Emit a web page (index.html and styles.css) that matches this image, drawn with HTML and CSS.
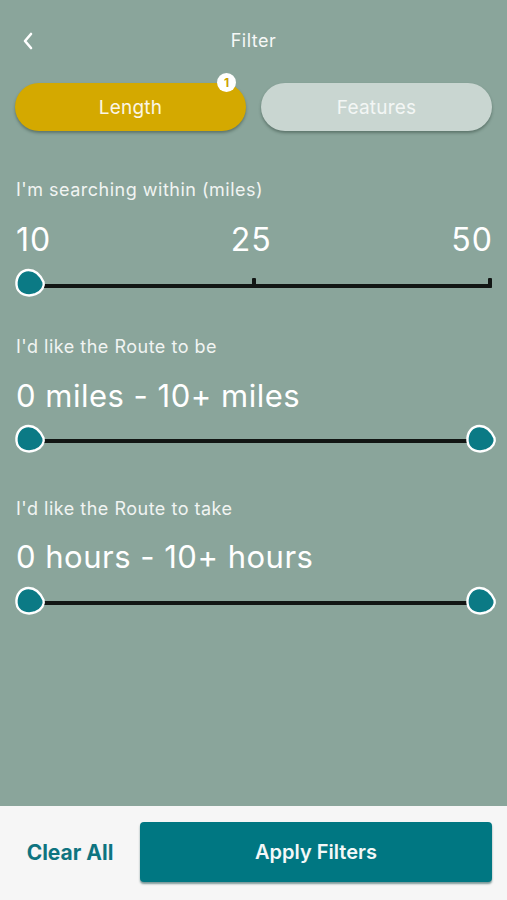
FILE: index.html
```html
<!DOCTYPE html>
<html>
<head>
<meta charset="utf-8">
<link rel="stylesheet" href="styles.css">
</head>
<body>
<div class="screen">
  <header class="topbar">
    <span class="back">
      <svg width="12" height="18" viewBox="0 0 12 18"><path d="M9 2 L3 9 L9 16" fill="none" stroke="#fff" stroke-width="2.6" stroke-linecap="round" stroke-linejoin="round"/></svg>
    </span>
    <h1 class="title">Filter</h1>
  </header>

  <div class="tabs">
    <div class="tab tab-active">Length<span class="badge">1</span></div>
    <div class="tab tab-idle">Features</div>
  </div>

  <section class="group g1">
    <div class="label">I'm searching within (miles)</div>
    <div class="scale"><span>10</span><span>25</span><span>50</span></div>
    <div class="slider">
      <div class="track"></div>
      <div class="tick tick-mid"></div>
      <div class="tick tick-end"></div>
      <svg class="thumb thumb-left" width="32" height="32" viewBox="0 0 32 32"><path d="M14.5 3 C21.5 3 26.5 8.5 29.5 15 C30.8 19 28 24.5 21.5 27.2 C14 30 3.5 28 2.5 18 C1.8 9 7.5 3 14.5 3 Z" fill="#0b7a85" stroke="#fff" stroke-width="2.4"/></svg>
    </div>
  </section>

  <section class="group g2">
    <div class="label">I'd like the Route to be</div>
    <div class="value">0 miles - 10+ miles</div>
    <div class="slider">
      <div class="track"></div>
      <svg class="thumb thumb-left" width="32" height="32" viewBox="0 0 32 32"><path d="M14.5 3 C21.5 3 26.5 8.5 29.5 15 C30.8 19 28 24.5 21.5 27.2 C14 30 3.5 28 2.5 18 C1.8 9 7.5 3 14.5 3 Z" fill="#0b7a85" stroke="#fff" stroke-width="2.4"/></svg>
      <svg class="thumb thumb-right" width="32" height="32" viewBox="0 0 32 32"><path d="M14.5 3 C21.5 3 26.5 8.5 29.5 15 C30.8 19 28 24.5 21.5 27.2 C14 30 3.5 28 2.5 18 C1.8 9 7.5 3 14.5 3 Z" fill="#0b7a85" stroke="#fff" stroke-width="2.4"/></svg>
    </div>
  </section>

  <section class="group g3">
    <div class="label">I'd like the Route to take</div>
    <div class="value">0 hours - 10+ hours</div>
    <div class="slider">
      <div class="track"></div>
      <svg class="thumb thumb-left" width="32" height="32" viewBox="0 0 32 32"><path d="M14.5 3 C21.5 3 26.5 8.5 29.5 15 C30.8 19 28 24.5 21.5 27.2 C14 30 3.5 28 2.5 18 C1.8 9 7.5 3 14.5 3 Z" fill="#0b7a85" stroke="#fff" stroke-width="2.4"/></svg>
      <svg class="thumb thumb-right" width="32" height="32" viewBox="0 0 32 32"><path d="M14.5 3 C21.5 3 26.5 8.5 29.5 15 C30.8 19 28 24.5 21.5 27.2 C14 30 3.5 28 2.5 18 C1.8 9 7.5 3 14.5 3 Z" fill="#0b7a85" stroke="#fff" stroke-width="2.4"/></svg>
    </div>
  </section>

  <div class="spacer"></div>

  <footer class="footer">
    <button class="clear">Clear All</button>
    <button class="apply">Apply Filters</button>
  </footer>
</div>
</body>
</html>
```
FILE: styles.css
```css
* { box-sizing: border-box; }
html, body { margin: 0; padding: 0; }
body {
  font-family: Inter, "Liberation Sans", sans-serif;
  background: #8aa59b;
  color: #fff;
}
.screen {
  width: 507px;
  height: 900px;
  display: flex;
  flex-direction: column;
}
.topbar {
  height: 83px;
  position: relative;
  display: flex;
  align-items: center;
  justify-content: center;
  padding-bottom: 1px;
}
.back {
  position: absolute;
  left: 22px;
  top: 32px;
  width: 12px;
  height: 18px;
  display: flex;
}
.title {
  margin: 0;
  font-size: 18px;
  letter-spacing: 0.5px;
  font-weight: 400;
  color: #f6f8f7;
  line-height: 20px;
  margin-top: -1px;
}
.tabs {
  display: flex;
  gap: 15px;
  padding: 0 15px;
}
.tab {
  flex: 1;
  height: 48px;
  border-radius: 24px;
  display: flex;
  align-items: center;
  justify-content: center;
  font-size: 19px;
  letter-spacing: 0.2px;
  color: #fbf6e6;
  position: relative;
  box-shadow: 0 2px 3px rgba(40, 60, 50, 0.45);
}
.tab-active { background: #d4a900; }
.tab-idle { background: #c9d6d1; color: #f3f6f5; }
.badge {
  position: absolute;
  right: 10px;
  top: -10px;
  width: 19px;
  height: 19px;
  border-radius: 50%;
  background: #fff;
  color: #c9a000;
  font-size: 12px;
  font-weight: 700;
  letter-spacing: 0;
  display: flex;
  align-items: center;
  justify-content: center;
}
.group { padding: 0 16px 0 16px; }
.label {
  font-size: 18px;
  letter-spacing: 0.5px;
  line-height: 22px;
  color: #f1f4f2;
}
.g1 { margin-top: 48px; }
.g2 { margin-top: 36px; }
.g3 { margin-top: 42px; }
.scale {
  margin-top: 21px;
  display: flex;
  justify-content: space-between;
  font-size: 32px;
  letter-spacing: 1px;
  line-height: 36px;
  margin-right: -2px;
}
.value {
  margin-top: 20px;
  font-size: 31px;
  letter-spacing: 0.5px;
  line-height: 36px;
}
.g3 .value { margin-top: 19px; }
.slider {
  position: relative;
  height: 30px;
  margin-top: 12px;
}
.g3 .slider { margin-top: 13px; }
.track {
  position: absolute;
  left: 12px;
  right: -1px;
  top: 14px;
  height: 4px;
  background: #121614;
  border-radius: 2px;
}
.g2 .track, .g3 .track { right: 12px; top: 13px; }
.tick {
  position: absolute;
  width: 4px;
  height: 10px;
  background: #121614;
  top: 8px;
  border-radius: 1px;
}
.tick-mid { left: 236px; }
.tick-end { right: -1px; }
.thumb {
  position: absolute;
  top: -3px;
}
.thumb-left { left: -2px; }
.thumb-right { right: -6px; }
.spacer { flex: 1; }
.footer {
  height: 94px;
  background: #f6f6f6;
  display: flex;
  align-items: flex-start;
  padding: 16px 15px 0 0;
}
.clear {
  width: 140px;
  height: 60px;
  border: 0;
  background: none;
  font-family: Inter, "Liberation Sans", sans-serif;
  font-size: 21px;
  font-weight: 700;
  color: #0e7480;
  padding: 0;
}
.apply {
  flex: 1;
  height: 60px;
  border: 0;
  border-radius: 4px;
  background: #007782;
  color: #f3f8f8;
  font-family: Inter, "Liberation Sans", sans-serif;
  font-size: 20px;
  font-weight: 600;
  box-shadow: 0 2px 2px rgba(0, 60, 60, 0.5);
}
```
